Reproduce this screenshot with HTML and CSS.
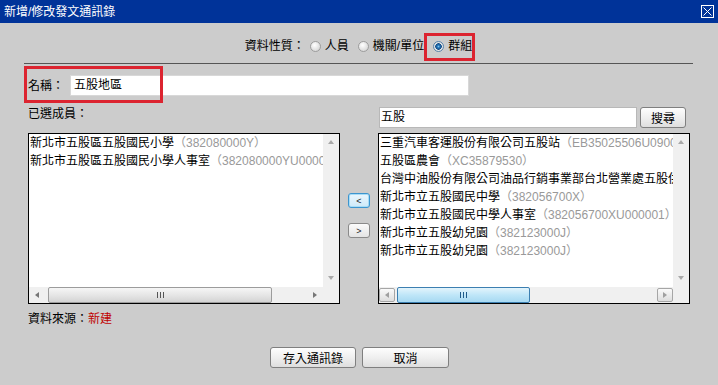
FILE: index.html
```html
<!DOCTYPE html>
<html lang="zh-Hant">
<head>
  <meta charset="UTF-8" />
  <title>新增/修改發文通訊錄</title>
  <link rel="stylesheet" href="styles.css">
</head>
<body>

  <div class="titlebar">
    <span class="title">新增/修改發文通訊錄</span>
    <svg class="close" width="13" height="13" viewBox="0 0 13 13">
      <rect x="0.5" y="0.5" width="12" height="12" fill="none" stroke="#fff" />
      <path d="M2.5 2.5 L10.5 10.5 M10.5 2.5 L2.5 10.5" stroke="#fff" />
    </svg>
  </div>

  <div class="dialog">
    <div class="type-row">
      <span class="field-label">資料性質：</span>
      <label class="opt"><span class="radio"></span>人員</label>
      <label class="opt"><span class="radio"></span>機關/單位</label>
      <label class="opt marked"><span class="radio checked"></span>群組</label>
    </div>

    <div class="name-row">
      <span>名稱：</span>
      <div class="textbox name-box">五股地區</div>
      <div class="mark name-mark"></div>
    </div>

    <div class="pickers">
      <!-- selected members -->
      <div class="col">
        <div class="col-head"><span class="head-label">已選成員：</span></div>
        <div class="listbox">
          <div class="list-main">
            <div class="items">
              <div>新北市五股區五股國民小學<span class="code">（382080000Y）</span></div>
              <div>新北市五股區五股國民小學人事室<span class="code">（382080000YU000001）</span></div>
            </div>
            <div class="vscroll">
              <span class="arr up"></span>
              <span class="arr down"></span>
            </div>
          </div>
          <div class="hscroll">
            <span class="harr"><span class="arr left"></span></span>
            <div class="track"><div class="thumb left-thumb"><span class="grip"></span></div></div>
            <span class="harr"><span class="arr right"></span></span>
            <span class="corner"></span>
          </div>
        </div>
      </div>

      <div class="move">
        <button class="small-btn focus">&lt;</button>
        <button class="small-btn">&gt;</button>
      </div>

      <!-- search results -->
      <div class="col">
        <div class="col-head">
          <div class="textbox search-box">五股</div>
          <button class="btn search-btn">搜尋</button>
        </div>
        <div class="listbox">
          <div class="list-main">
            <div class="items">
              <div>三重汽車客運股份有限公司五股站<span class="code">（EB35025506U0900）</span></div>
              <div>五股區農會<span class="code">（XC35879530）</span></div>
              <div>台灣中油股份有限公司油品行銷事業部台北營業處五股供油中心<span class="code">（A15000000）</span></div>
              <div>新北市立五股國民中學<span class="code">（382056700X）</span></div>
              <div>新北市立五股國民中學人事室<span class="code">（382056700XU000001）</span></div>
              <div>新北市立五股幼兒園<span class="code">（382123000J）</span></div>
              <div>新北市立五股幼兒園<span class="code">（382123000J）</span></div>
            </div>
            <div class="vscroll">
              <span class="arr up"></span>
              <span class="arr down"></span>
            </div>
          </div>
          <div class="hscroll">
            <span class="harr boxed"><span class="arr left"></span></span>
            <div class="track"><div class="thumb blue-thumb"><span class="grip"></span></div></div>
            <span class="harr boxed"><span class="arr right"></span></span>
            <span class="corner"></span>
          </div>
        </div>
      </div>
    </div>

    <div class="source">資料來源：<span class="new">新建</span></div>

    <div class="actions">
      <button class="btn save-btn">存入通訊錄</button>
      <button class="btn cancel-btn">取消</button>
    </div>
  </div>

</body>
</html>
```

FILE: styles.css
```css
* {
  box-sizing: border-box;
}

body {
  margin: 0;
  height: 385px;
  overflow: hidden;
  background: #cccccc;
  font-family: "Liberation Sans", "Noto Sans CJK TC", sans-serif;
  font-size: 12px;
  line-height: 18px;
  color: #000;
}

.titlebar {
  height: 23px;
  background: #003399;
  color: #fff;
  display: flex;
  align-items: center;
  justify-content: space-between;
  padding: 0 4px;
}

.close {
  margin-top: -1px;
}

.dialog {
  margin: 0 25px 0 24px;
}

.type-row {
  height: 41px;
  padding-top: 6px;
  display: flex;
  align-items: center;
  justify-content: center;
  border-bottom: 1px solid #555;
}

.field-label {
  margin-right: 5px;
}

.opt {
  display: inline-flex;
  align-items: center;
  gap: 4px;
}

.opt + .opt {
  margin-left: 9px;
}

.opt.marked {
  position: relative;
}

.opt.marked::after {
  content: "";
  position: absolute;
  left: -9px;
  right: -3px;
  top: -4px;
  bottom: -6px;
  border: 3px solid #dc2430;
}

.radio {
  width: 11px;
  height: 11px;
  border-radius: 50%;
  border: 1px solid #9d9d9d;
  background: radial-gradient(circle at 40% 35%, #ffffff, #d9d9d9 75%);
}

.radio.checked {
  border-color: #5a84ab;
  background: radial-gradient(circle at 50% 50%, #7cc4ee 0, #2070b4 1.5px, #184e86 3px, #e9e9e9 3.5px, #d0d0d0 100%);
}

.name-row {
  position: relative;
  display: flex;
  align-items: center;
  gap: 6px;
  padding: 11px 0 0 4px;
}

.textbox {
  height: 21px;
  background: #fff;
  line-height: 19px;
  white-space: nowrap;
}

.name-box {
  width: 399px;
  border: 1px solid #d8d8d8;
  padding-left: 3px;
}

.mark {
  position: absolute;
  border: 3px solid #dc2430;
}

.name-mark {
  left: 0;
  top: 2px;
  width: 139px;
  height: 37px;
}

.pickers {
  display: flex;
  margin-top: 11px;
  padding-left: 4px;
}

.col {
  width: 312px;
  display: flex;
  flex-direction: column;
}

.col-head {
  height: 21px;
  margin-bottom: 5px;
  display: flex;
  align-items: flex-start;
}

.head-label {
  line-height: 14px;
}

.search-box {
  width: 258px;
  margin-left: 1px;
  border: 1px solid #b8b8b8;
  padding-left: 1px;
}

.btn {
  font-family: inherit;
  font-size: 12px;
  color: #000;
  height: 21px;
  padding: 0;
  border: 1px solid #7f7f7f;
  border-radius: 3px;
  background: linear-gradient(#fdfdfd, #efefef 50%, #dedede);
}

.search-btn {
  width: 46px;
  margin-left: 3px;
}

.move {
  width: 38px;
  height: 171px;
  margin-top: 26px;
  padding-bottom: 6px;
  display: flex;
  flex-direction: column;
  align-items: center;
  justify-content: center;
  gap: 15px;
}

.small-btn {
  width: 22px;
  height: 15px;
  padding: 0;
  font-family: inherit;
  font-size: 9px;
  line-height: 12px;
  color: #222;
  border: 1px solid #8a8a8a;
  border-radius: 3px;
  background: linear-gradient(#fbfbfb, #e4e4e4);
}

.small-btn.focus {
  border-color: #3c95cf;
  background: linear-gradient(#eaf6fd, #cfeaf9);
  box-shadow: inset 0 0 0 1px #a8dcf6;
}

.listbox {
  height: 171px;
  border: 1px solid #000;
  background: #fff;
  display: flex;
  flex-direction: column;
}

.list-main {
  flex: 1;
  display: flex;
  min-height: 0;
}

.items {
  flex: 1;
  overflow: hidden;
  white-space: nowrap;
  padding-left: 1px;
}

.code {
  color: #999;
}

.vscroll {
  width: 16px;
  background: #f0f0f0;
  display: flex;
  flex-direction: column;
  justify-content: space-between;
  align-items: center;
  padding: 6px 0 7px;
}

.arr {
  width: 0;
  height: 0;
  border: 3px solid transparent;
}

.arr.up {
  border-bottom: 4px solid #a9a9a9;
  border-top-width: 0;
}

.arr.down {
  border-top: 4px solid #a9a9a9;
  border-bottom-width: 0;
}

.arr.left {
  border-right: 4px solid #777;
  border-left-width: 0;
}

.arr.right {
  border-left: 4px solid #777;
  border-right-width: 0;
}

.hscroll {
  height: 16px;
  display: flex;
  background: #f0f0f0;
}

.harr {
  width: 16px;
  display: flex;
  align-items: center;
  justify-content: center;
}

.harr.boxed {
  margin: 1px 0;
  border: 1px solid #a6a6a6;
  border-radius: 2px;
  background: linear-gradient(#fafafa, #dedede);
}

.harr.boxed .arr.left {
  border-right-color: #a0a0a0;
}

.harr.boxed .arr.right {
  border-left-color: #a0a0a0;
}

.corner {
  width: 16px;
  background: #f0f0f0;
}

.track {
  flex: 1;
  padding: 0;
}

.thumb {
  height: 16px;
  border-radius: 2px;
  display: flex;
  align-items: center;
  justify-content: center;
}

.left-thumb {
  width: 224px;
  margin-left: 3px;
  border: 1px solid #9c9c9c;
  background: linear-gradient(#f6f6f6, #e6e6e6 50%, #d4d4d4);
}

.blue-thumb {
  width: 133px;
  margin-left: 2px;
  border: 1px solid #3c7fb1;
  background: linear-gradient(#e3f4fc, #bfe6f8 50%, #a7d9f2);
}

.grip {
  width: 7px;
  height: 6px;
  background: repeating-linear-gradient(90deg, #555 0 1px, transparent 1px 3px);
}

.blue-thumb .grip {
  background: repeating-linear-gradient(90deg, #1f5b8a 0 1px, transparent 1px 3px);
}

.source {
  margin-top: 6px;
  padding-left: 4px;
}

.new {
  color: #c00000;
}

.actions {
  display: flex;
  justify-content: center;
  gap: 6px;
  margin-top: 19px;
  padding-left: 2px;
}

.save-btn {
  width: 86px;
}

.cancel-btn {
  width: 87px;
}
```
